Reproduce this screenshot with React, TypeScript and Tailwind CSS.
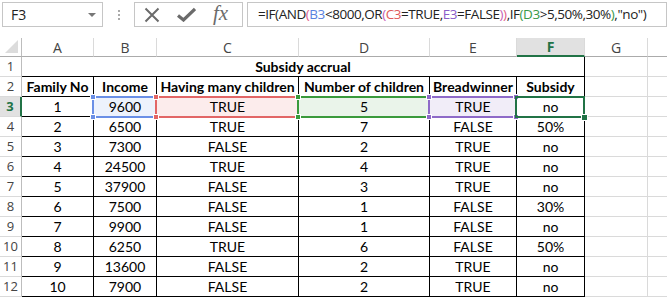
import React from "react";

const rows: [string, string, string, string, string, string][] = [
  ["1", "9600", "TRUE", "5", "TRUE", "no"],
  ["2", "6500", "TRUE", "7", "FALSE", "50%"],
  ["3", "7300", "FALSE", "2", "TRUE", "no"],
  ["4", "24500", "TRUE", "4", "TRUE", "no"],
  ["5", "37900", "FALSE", "3", "TRUE", "no"],
  ["6", "7500", "FALSE", "1", "FALSE", "30%"],
  ["7", "9900", "FALSE", "1", "FALSE", "no"],
  ["8", "6250", "TRUE", "6", "FALSE", "50%"],
  ["9", "13600", "FALSE", "2", "TRUE", "no"],
  ["10", "7900", "FALSE", "2", "TRUE", "no"],
];

const ui = "font-['Open_Sans',sans-serif]";
const cellFont = "font-['Lato',sans-serif]";

// colored box drawn over a referenced cell, with a square at each corner
const RefBox = ({ border, fill }: { border: string; fill: string }) => (
  <div className={`absolute -left-[2px] -top-px -right-px -bottom-[2px] border-2 ${border} pointer-events-none z-10`}>
    <span className={`absolute -left-[4px] -top-[4px] w-[6px] h-[6px] border border-white ${fill}`} />
    <span className={`absolute -right-[4px] -top-[4px] w-[6px] h-[6px] border border-white ${fill}`} />
    <span className={`absolute -left-[4px] -bottom-[4px] w-[6px] h-[6px] border border-white ${fill}`} />
    <span className={`absolute -right-[4px] -bottom-[4px] w-[6px] h-[6px] border border-white ${fill}`} />
  </div>
);

const FormulaBar = () => (
  <div className={`h-[38px] flex items-start pt-[2px] ${ui}`}>
    <div className="ml-[2px] w-[101px] h-[25px] border border-[#c6c6c6] flex items-center justify-between pl-[8px] pr-[6px]">
      <span className="text-[14px] text-[#222]">F3</span>
      <span className="w-0 h-0 border-l-[4px] border-r-[4px] border-t-[4px] border-l-transparent border-r-transparent border-t-[#777]" />
    </div>
    <div className="w-[31px] h-[25px] flex flex-col items-center justify-center gap-[2px]">
      <span className="w-[2px] h-[2px] bg-[#aaa]" />
      <span className="w-[2px] h-[2px] bg-[#aaa]" />
      <span className="w-[2px] h-[2px] bg-[#aaa]" />
    </div>
    <div className="w-[109px] h-[25px] border border-[#c6c6c6] flex items-center pl-[9px] gap-[17px] text-[#6b6b6b]">
      <svg width="16" height="16" viewBox="0 0 16 16">
        <path d="M1.5 1.5L14.5 14.5M14.5 1.5L1.5 14.5" stroke="#6b6b6b" strokeWidth="2" fill="none" />
      </svg>
      <svg width="19" height="15" viewBox="0 0 19 15">
        <path d="M1 8.5L6.5 13L18 2" stroke="#6b6b6b" strokeWidth="3.2" fill="none" strokeLinejoin="miter" />
      </svg>
      <span className="font-['Liberation_Serif',serif] italic text-[21px] leading-none -mt-[2px]">fx</span>
    </div>
    <div className="ml-[4px] flex-1 h-[25px] border border-[#c6c6c6] flex items-center pl-[10px] text-[13.5px] text-[#222] whitespace-nowrap overflow-hidden tracking-[-0.45px]">
      <span>=IF(AND</span>
      <span className="text-[#e0608a]">(</span>
      <span className="text-[#5a82e0]">B3</span>
      <span>&lt;8000,OR</span>
      <span className="text-[#c560b8]">(</span>
      <span className="text-[#e05a5a]">C3</span>
      <span>=TRUE,</span>
      <span className="text-[#8a5cc8]">E3</span>
      <span>=FALSE</span>
      <span className="text-[#c560b8]">)</span>
      <span className="text-[#e0608a]">)</span>
      <span>,IF</span>
      <span className="text-[#3a9a48]">(</span>
      <span className="text-[#3a9a48]">D3</span>
      <span>&gt;5,50%,30%</span>
      <span className="text-[#3a9a48]">)</span>
      <span>,"no")</span>
    </div>
  </div>
);

const grid = "grid grid-cols-[22px_72px_63px_142px_131px_87px_68px_63px_1fr] grid-rows-[19px_repeat(12,20px)]";
const gray = "border-r border-b border-[#dadada]";
const black = "border-r border-b border-black";
const rowHead = `flex items-center justify-center border-r border-b border-r-[#bdbdbd] border-b-[#dadada] text-[13px] text-[#444] ${ui}`;

export default function App() {
  return (
    <div className="w-[667px] h-[299px] overflow-hidden bg-white">
      <FormulaBar />
      <div className={grid}>
        {/* column headers */}
        <div className="relative border-r border-b border-r-[#bdbdbd] border-b-[#ababab]">
          <svg className="absolute right-[3px] bottom-[3px]" width="13" height="13" viewBox="0 0 13 13">
            <path d="M13 0V13H0Z" fill="#dcdcdc" />
          </svg>
        </div>
        {["A", "B", "C", "D", "E"].map((c) => (
          <div key={c} className={`flex items-center justify-center border-r border-b border-r-[#dadada] border-b-[#ababab] text-[14px] text-[#444] ${ui}`}>
            {c}
          </div>
        ))}
        <div className={`flex items-center justify-center bg-[#e1e1e1] border-r border-r-[#dadada] border-b-2 border-b-[#217346] text-[14px] font-bold text-[#217346] ${ui}`}>
          F
        </div>
        <div className={`flex items-center justify-center border-r border-b border-r-[#dadada] border-b-[#ababab] text-[14px] text-[#444] ${ui}`}>
          G
        </div>
        <div className="border-b border-[#ababab]" />

        {/* row 1 */}
        <div className={rowHead}>1</div>
        <div className={`col-span-6 flex items-center justify-center ${black} text-[14px] font-bold text-black ${cellFont}`}>
          Subsidy accrual
        </div>
        <div className={gray} />
        <div className="border-b border-[#dadada]" />

        {/* row 2 */}
        <div className={rowHead}>2</div>
        {["Family No", "Income", "Having many children", "Number of children", "Breadwinner", "Subsidy"].map((h) => (
          <div key={h} className={`flex items-center justify-center ${black} text-[14px] font-bold text-black whitespace-nowrap ${cellFont}`}>
            {h}
          </div>
        ))}
        <div className={gray} />
        <div className="border-b border-[#dadada]" />

        {/* data rows */}
        {rows.map((r, i) => {
          const active = i === 0;
          return (
            <React.Fragment key={i}>
              <div
                className={
                  active
                    ? `flex items-center justify-center bg-[#e1e1e1] border-r-2 border-b border-r-[#217346] border-b-[#dadada] text-[13px] font-bold text-[#217346] ${ui}`
                    : rowHead
                }
              >
                {i + 3}
              </div>
              {r.map((v, j) => {
                let bg = "";
                let box: React.ReactNode = null;
                if (active) {
                  if (j === 1) {
                    bg = "bg-[#edf2fc]";
                    box = <RefBox border="border-[#6a8fe6]" fill="bg-[#6a8fe6]" />;
                  } else if (j === 2) {
                    bg = "bg-[#fcecec]";
                    box = <RefBox border="border-[#e26666]" fill="bg-[#e26666]" />;
                  } else if (j === 3) {
                    bg = "bg-[#eaf4ea]";
                    box = <RefBox border="border-[#3a9a3c]" fill="bg-[#3a9a3c]" />;
                  } else if (j === 4) {
                    bg = "bg-[#f1edf8]";
                    box = <RefBox border="border-[#8e6ac8]" fill="bg-[#8e6ac8]" />;
                  } else if (j === 5) {
                    box = (
                      <div className="absolute -left-[2px] -top-px -right-px -bottom-[2px] border-2 border-[#217346] z-20">
                        <span className="absolute -right-[5px] -bottom-[5px] w-[7px] h-[7px] bg-[#217346] border border-white" />
                      </div>
                    );
                  }
                }
                return (
                  <div key={j} className={`relative flex items-center justify-center ${black} ${bg} text-[14px] text-black ${cellFont}`}>
                    {v}
                    {box}
                  </div>
                );
              })}
              <div className={gray} />
              <div className="border-b border-[#dadada]" />
            </React.Fragment>
          );
        })}
      </div>
    </div>
  );
}
